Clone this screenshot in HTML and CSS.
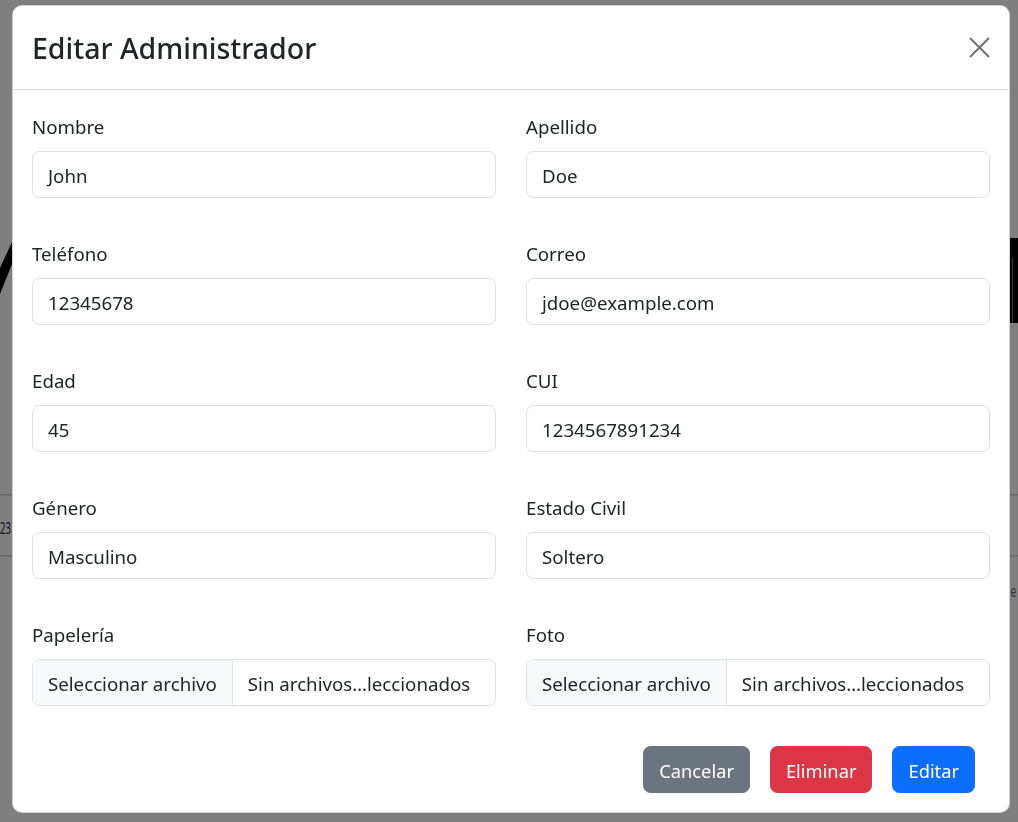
FILE: index.html
```html
<!DOCTYPE html>
<html lang="es">
<head>
<meta charset="utf-8">
<title>Editar Administrador</title>
<link rel="stylesheet" href="styles.css">
</head>
<body>
<div class="page">
  <svg class="page-art" width="1018" height="822" viewBox="0 0 1018 822">
    <polygon points="0,268 12,242 12,264 0,294" fill="#000"/>
    <rect x="1010" y="238" width="8" height="85" fill="#000"/>
    <rect x="1012" y="257" width="1" height="66" fill="#777"/>
    <rect x="0" y="494" width="12" height="1.5" fill="#d0d0d0"/>
    <rect x="0" y="555" width="12" height="1.5" fill="#d0d0d0"/>
    <rect x="1010" y="494" width="8" height="1.5" fill="#d0d0d0"/>
    <rect x="1010" y="555" width="8" height="1.5" fill="#d0d0d0"/>
    <text x="0" y="534" textLength="11" lengthAdjust="spacingAndGlyphs" class="art-text">23</text>
    <text x="1010.5" y="597" textLength="6" lengthAdjust="spacingAndGlyphs" class="art-text muted">e</text>
  </svg>
</div>
<div class="backdrop"></div>
<div class="modal">
  <div class="modal-content">
    <div class="modal-header">
      <h2 class="modal-title">Editar Administrador</h2>
      <button class="btn-close" type="button" aria-label="Cerrar">
        <svg width="21" height="21" viewBox="0 0 21 21"><path d="M1 1 L20 20 M20 1 L1 20" stroke="#000" stroke-width="2.1" fill="none"/></svg>
      </button>
    </div>
    <div class="modal-body">
      <div class="field"><label class="form-label">Nombre</label><div class="form-control">John</div></div>
      <div class="field"><label class="form-label">Apellido</label><div class="form-control">Doe</div></div>
      <div class="field"><label class="form-label">Teléfono</label><div class="form-control">12345678</div></div>
      <div class="field"><label class="form-label">Correo</label><div class="form-control">jdoe@example.com</div></div>
      <div class="field"><label class="form-label">Edad</label><div class="form-control">45</div></div>
      <div class="field"><label class="form-label">CUI</label><div class="form-control">1234567891234</div></div>
      <div class="field"><label class="form-label">Género</label><div class="form-control">Masculino</div></div>
      <div class="field"><label class="form-label">Estado Civil</label><div class="form-control">Soltero</div></div>
      <div class="field"><label class="form-label">Papelería</label><div class="form-control file"><span class="file-btn">Seleccionar archivo</span><span class="file-name">Sin archivos…leccionados</span></div></div>
      <div class="field"><label class="form-label">Foto</label><div class="form-control file"><span class="file-btn">Seleccionar archivo</span><span class="file-name">Sin archivos…leccionados</span></div></div>
    </div>
    <div class="modal-footer">
      <button class="btn btn-secondary" type="button">Cancelar</button>
      <button class="btn btn-danger" type="button">Eliminar</button>
      <button class="btn btn-primary" type="button">Editar</button>
    </div>
  </div>
</div>
</body>
</html>
```
FILE: styles.css
```css
* { box-sizing: border-box; }
html, body {
  margin: 0;
  width: 1018px;
  height: 822px;
  overflow: hidden;
  background: #fff;
  font-family: "Noto Sans", "Open Sans", sans-serif;
  color: #212529;
}
.page { width: 1018px; height: 822px; }
.page-art { display: block; }
.art-text { font-family: "Noto Sans", sans-serif; font-size: 16px; fill: #1d2340; }
.art-text.muted { fill: #6c757d; font-size: 16px; }

.backdrop {
  position: fixed;
  inset: 0;
  background: rgba(0, 0, 0, 0.5);
}
.modal {
  position: fixed;
  top: 5px;
  left: 12px;
  width: 998px;
}
.modal-content {
  background: #fff;
  border: 1px solid rgba(0, 0, 0, 0.175);
  border-radius: 10px;
  display: flex;
  flex-direction: column;
}
.modal-header {
  display: flex;
  align-items: center;
  justify-content: space-between;
  padding: 24px 19px 22px 19px;
  border-bottom: 1px solid #dee2e6;
}
.modal-title {
  margin: 0;
  font-size: 28.5px;
  line-height: 37px;
  font-weight: 500;
  color: #212529;
}
.btn-close {
  background: none;
  border: 0;
  padding: 0;
  width: 21px;
  height: 21px;
  margin-top: -2px;
  opacity: 0.55;
  display: flex;
}
.modal-body {
  padding: 21px 19px 20px 19px;
  display: grid;
  grid-template-columns: 1fr 1fr;
  column-gap: 30px;
  row-gap: 40px;
}
.field { display: flex; flex-direction: column; }
.form-label {
  font-size: 18.7px;
  line-height: 30px;
  padding-top: 1px;
  margin-bottom: 9px;
}
.form-control {
  height: 47px;
  border: 1px solid #dee2e6;
  border-radius: 7.5px;
  padding: 3px 15px 0;
  font-size: 18.7px;
  line-height: 42px;
  color: #212529;
  background: #fff;
  white-space: nowrap;
  overflow: hidden;
}
.form-control.file {
  padding: 0;
  display: flex;
}
.file-btn {
  background: #f8f9fa;
  border-right: 1px solid #dee2e6;
  padding: 3px 15px 0;
}
.file-name { padding: 3px 15px 0; }

.modal-footer {
  display: flex;
  justify-content: flex-end;
  gap: 20px;
  padding: 20px 34px 19px 19px;
}
.btn {
  height: 47px;
  padding: 3px 15px 0;
  border: 1px solid transparent;
  border-radius: 7.5px;
  font-family: inherit;
  font-size: 18.3px;
  line-height: 42px;
  color: #fff;
}
.btn-secondary { background: #6c757d; border-color: #6c757d; }
.btn-danger { background: #dc3545; border-color: #dc3545; }
.btn-primary { background: #0d6efd; border-color: #0d6efd; }
```
